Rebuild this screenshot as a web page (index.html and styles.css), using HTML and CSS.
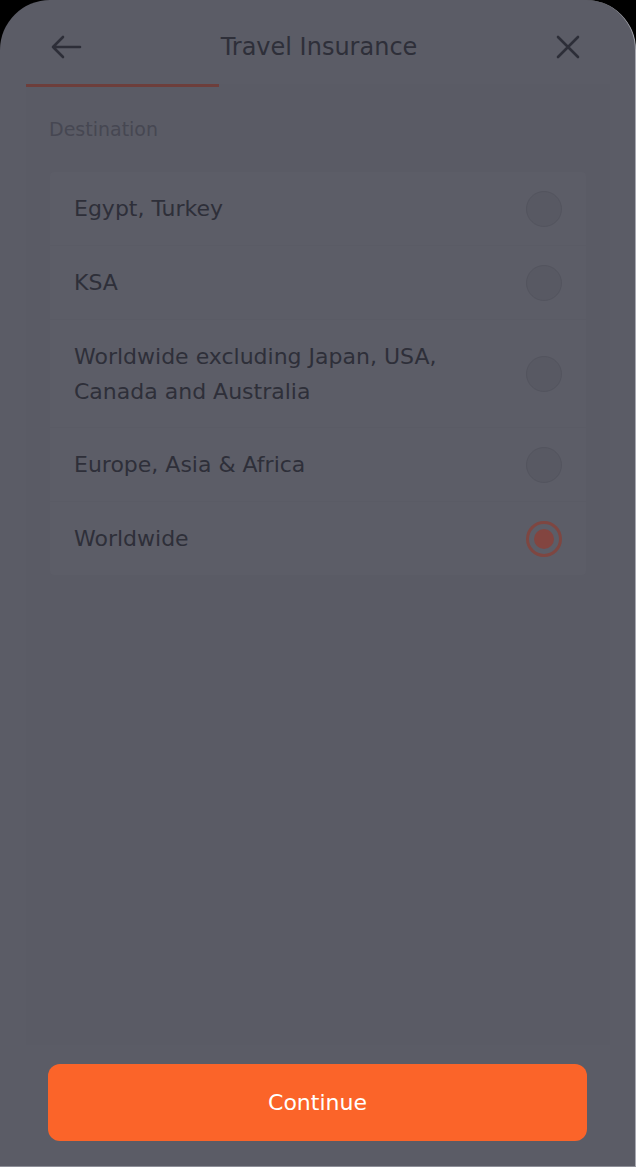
FILE: index.html
```html
<!DOCTYPE html>
<html lang="en">

<head>
  <meta charset="UTF-8">
  <meta name="viewport" content="width=device-width, initial-scale=1.0">
  <title>Travel Insurance</title>
  <link rel="stylesheet" href="styles.css">
</head>

<body>
  <div class="screen">
    <div class="header">
      <button class="icon-btn" aria-label="Back">
        <svg width="32" height="26" viewBox="0 0 32 26">
          <path d="M30 13H3M13 3L3 13l10 10" fill="none" stroke="#2d2e38" stroke-width="2.6" stroke-linecap="round" stroke-linejoin="round" />
        </svg>
      </button>
      <h1 class="title">Travel Insurance</h1>
      <button class="icon-btn" aria-label="Close">
        <svg width="24" height="24" viewBox="0 0 24 24">
          <path d="M2 2l20 20M22 2L2 22" fill="none" stroke="#2d2e38" stroke-width="2.6" stroke-linecap="round" />
        </svg>
      </button>
    </div>

    <div class="sheet">
      <div class="progress">
        <div class="progress-bar" style="width: 33%"></div>
      </div>

      <div class="label">Destination</div>

      <div class="options">
        <div class="option">
          <span class="option-text">Egypt, Turkey</span>
          <span class="radio"></span>
        </div>
        <div class="option">
          <span class="option-text">KSA</span>
          <span class="radio"></span>
        </div>
        <div class="option">
          <span class="option-text">Worldwide excluding Japan, USA, Canada and Australia</span>
          <span class="radio"></span>
        </div>
        <div class="option">
          <span class="option-text">Europe, Asia &amp; Africa</span>
          <span class="radio"></span>
        </div>
        <div class="option">
          <span class="option-text">Worldwide</span>
          <span class="radio checked"></span>
        </div>
      </div>
    </div>

    <div class="footer">
      <button class="continue">Continue</button>
    </div>
  </div>
</body>

</html>
```

FILE: styles.css
```css
:root {
  --background-color: #5b5c66;
  --sheet-color: #5a5b65;
  --card-color: #5c5d67;
  --text-color: #2e2f39;
  --muted-color: #464752;
  --accent-dim: #7e4641;
  --primary-color: #fb6429;
}

* {
  box-sizing: border-box;
}

body {
  margin: 0;
  padding: 0;
  background-color: #000;
  font-family: "DejaVu Sans", "Noto Sans", sans-serif;
}

.screen {
  display: flex;
  flex-direction: column;
  height: 100vh;
  border-radius: 50px 50px 0 0;
  background-color: var(--background-color);
  border-right: 1px solid #a9aab2;
  border-bottom: 1px solid #8e8f98;
  overflow: hidden;
}

.header {
  display: flex;
  align-items: center;
  justify-content: space-between;
  height: 84px;
  padding: 10px 55px 0 50px;
}

.icon-btn {
  display: flex;
  align-items: center;
  justify-content: center;
  padding: 0;
  border: none;
  background: none;
}

.title {
  margin: 0;
  font-size: 24px;
  font-weight: 400;
  color: var(--text-color);
}

.sheet {
  flex: 1;
  margin: 0 25px 0 26px;
  background-color: var(--sheet-color);
}

.progress {
  height: 3px;
}

.progress-bar {
  height: 100%;
  background-color: #6d3e3b;
}

.label {
  margin: 30px 0 0 23px;
  font-size: 19px;
  line-height: 24px;
  color: var(--muted-color);
}

.options {
  margin: 31px 24px 0 24px;
  background-color: var(--card-color);
  border-radius: 4px;
}

.option {
  display: flex;
  align-items: center;
  justify-content: space-between;
  padding: 18.5px 24px;
  border-bottom: 1px solid #5a5b65;
}

.option:last-child {
  border-bottom: none;
}

.option-text {
  max-width: 400px;
  font-size: 22px;
  line-height: 35px;
  color: var(--text-color);
}

.radio {
  flex-shrink: 0;
  width: 36px;
  height: 36px;
  border-radius: 50%;
  border: 1.5px solid #53545e;
  background-color: #585963;
}

.radio.checked {
  display: flex;
  align-items: center;
  justify-content: center;
  border: 3px solid var(--accent-dim);
  background-color: transparent;
}

.radio.checked::after {
  content: "";
  width: 20px;
  height: 20px;
  border-radius: 50%;
  background-color: #834540;
}

.footer {
  padding: 19px 48px 25px 48px;
}

.continue {
  width: 100%;
  height: 77px;
  border: none;
  border-radius: 12px;
  background-color: var(--primary-color);
  color: white;
  font-family: "DejaVu Sans", "Noto Sans", sans-serif;
  font-size: 22px;
}
```
